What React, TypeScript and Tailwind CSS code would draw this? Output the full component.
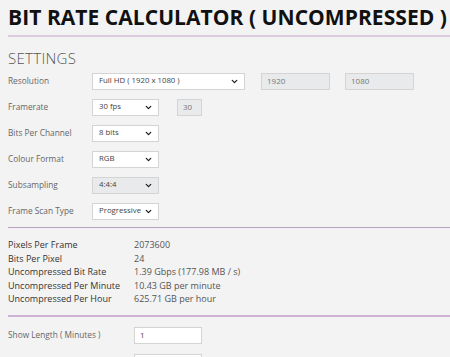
import { ChevronDown } from 'lucide-react';

const font = { fontFamily: '"Open Sans", "Noto Sans", sans-serif' };

function Select({ value, width, disabled = false }: { value: string; width: string; disabled?: boolean }) {
  return (
    <div
      className={`relative flex items-center h-[17px] border border-[#d4d4d4] pl-[6px] text-[7.8px] text-[#444] whitespace-nowrap ${width} ${
        disabled ? 'bg-[#e9eaeb]' : 'bg-white'
      }`}
    >
      <span>{value}</span>
      <ChevronDown className="absolute right-[5px] w-[9px] h-[9px] text-[#222]" strokeWidth={3.5} />
    </div>
  );
}

function Field({ value, width, gray = false }: { value: string; width: string; gray?: boolean }) {
  return (
    <div
      className={`flex items-center h-[17px] border border-[#d4d4d4] pl-[5px] text-[8px] ${width} ${
        gray ? 'bg-[#e9eaeb] text-[#777]' : 'bg-white text-[#444]'
      }`}
    >
      {value}
    </div>
  );
}

function SettingRow({ label, children }: { label: string; children: React.ReactNode }) {
  return (
    <div className="flex items-center h-[26px]">
      <div className="w-[84px] text-[8.3px] text-[#666]">{label}</div>
      {children}
    </div>
  );
}

const results = [
  ['Pixels Per Frame', '2073600'],
  ['Bits Per Pixel', '24'],
  ['Uncompressed Bit Rate', '1.39 Gbps (177.98 MB / s)'],
  ['Uncompressed Per Minute', '10.43 GB per minute'],
  ['Uncompressed Per Hour', '625.71 GB per hour'],
];

export default function App() {
  return (
    <div className="w-[450px] h-[357px] overflow-hidden bg-[#f3f3f3] pl-[8px]" style={font}>
      <h1 className="pt-[3px] h-[35px] text-[21px] font-bold text-[#111] tracking-[0.05px] whitespace-nowrap leading-[28px]">
        BIT RATE CALCULATOR ( UNCOMPRESSED )
      </h1>
      <div className="h-[2px] bg-[#dccbe0]" />
      <h2 className="mt-[13px] text-[15px] font-light text-[#555] leading-[16px] tracking-[0.3px]">SETTINGS</h2>

      <div className="mt-[2px]">
        <SettingRow label="Resolution">
          <Select value="Full HD ( 1920 x 1080 )" width="w-[153px]" />
          <div className="ml-[16px]">
            <Field value="1920" width="w-[69px]" gray />
          </div>
          <div className="ml-[15px]">
            <Field value="1080" width="w-[69px]" gray />
          </div>
        </SettingRow>
        <SettingRow label="Framerate">
          <Select value="30 fps" width="w-[67px]" />
          <div className="ml-[18px]">
            <Field value="30" width="w-[25px]" gray />
          </div>
        </SettingRow>
        <SettingRow label="Bits Per Channel">
          <Select value="8 bits" width="w-[67px]" />
        </SettingRow>
        <SettingRow label="Colour Format">
          <Select value="RGB" width="w-[67px]" />
        </SettingRow>
        <SettingRow label="Subsampling">
          <Select value="4:4:4" width="w-[67px]" disabled />
        </SettingRow>
        <SettingRow label="Frame Scan Type">
          <Select value="Progressive" width="w-[67px]" />
        </SettingRow>
      </div>

      <div className="mt-[3px] h-[1px] bg-[#b99fc0]" />

      <div className="pt-[10px] pb-[9px]">
        {results.map(([k, v]) => (
          <div key={k} className="flex items-center h-[13.5px] text-[9px]">
            <div className="w-[126px] text-[#333]">{k}</div>
            <div className="text-[#555]">{v}</div>
          </div>
        ))}
      </div>

      <div className="h-[2px] bg-[#cdb2d4]" />

      <div className="pt-[5px]">
        <div className="flex items-center h-[27px]">
          <div className="w-[126px] text-[8.3px] text-[#666]">Show Length ( Minutes )</div>
          <Field value="1" width="w-[68px]" />
        </div>
        <div className="flex items-center h-[27px]">
          <div className="w-[126px] text-[8.3px] text-[#666]">Number of Frames</div>
          <Field value="" width="w-[68px]" />
        </div>
      </div>
    </div>
  );
}
